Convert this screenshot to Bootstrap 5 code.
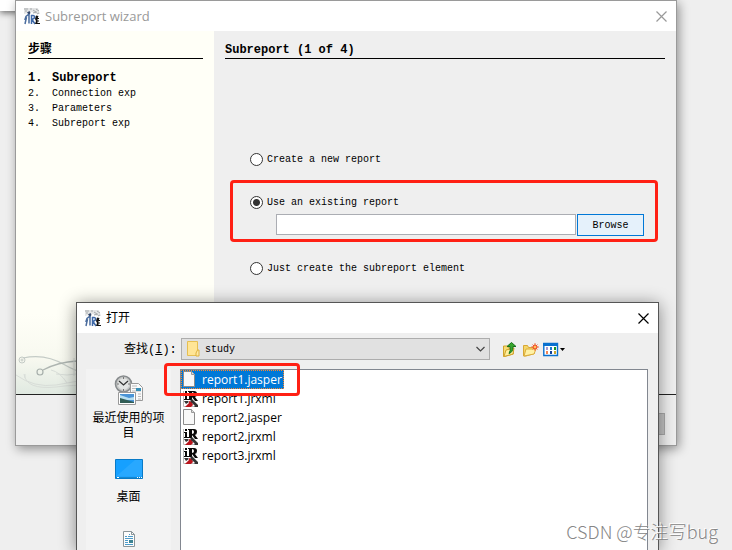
<!DOCTYPE html>
<html lang="zh-CN">
<head>
<meta charset="utf-8">
<meta name="viewport" content="width=device-width, initial-scale=1">
<title>Subreport wizard</title>
<link href="https://cdn.jsdelivr.net/npm/bootstrap@5.3.0/dist/css/bootstrap.min.css" rel="stylesheet">
<style>
  body { background: #efefef; color: #000; font-family: "Open Sans", "Noto Sans CJK SC", sans-serif; font-size: 12px; line-height: 15px; }
  .back-window { left: 0; top: 0; width: 330px; height: 11px; background: #fff; box-shadow: 0 2px 6px rgba(0,0,0,.55); }
  .win { border: 1px solid #9a9a9a; background: #efefef; }
  .win-wizard { left: 15px; right: 55px; top: 0; height: 446px; box-shadow: 2px 3px 10px rgba(0,0,0,.4); }
  .win-open { left: 76px; right: 73px; top: 302px; bottom: 0; border-color: #555; border-bottom: 0; box-shadow: 0 2px 16px rgba(0,0,0,.45); }
  .titlebar { height: 30px; background: #fff; padding: 0 7px 0 8px; gap: 4px; font-size: 12px; }
  .titlebar.inactive { color: #999; }
  .win-title { font-size: 12px; line-height: 18px; font-weight: 400; }
  .win-wizard .win-title { font-size: 13px; }
  .close-btn { color: inherit; line-height: 0; padding: 0 2px; }
  .mono { font-family: "Liberation Mono", "Noto Sans CJK SC", monospace; font-size: 10px; line-height: 15px; }
  .steps-panel { width: 198px; padding: 12px 11px 0 12px; background: linear-gradient(#fffff7 0 78%, #f8f9f0 90%, #e0e9e1); }
  .panel-heading { font: bold 12px/15px "Liberation Mono", "Noto Sans CJK SC", monospace; border-bottom: 1px solid #000; }
  .step-no { width: 24px; }
  .step-current { font-size: 12px; font-weight: 700; }
  .swirl { left: 0; bottom: 0; }
  .main-panel { padding: 12px 11px 0; }
  .choices { margin-top: 92px; padding-left: 25px; }
  .choice { gap: 4px; height: 16px; }
  .choice input { appearance: none; width: 13px; height: 13px; border: 1px solid #333; border-radius: 50%; background: #fff; margin: 0; }
  .choice input:checked { background: radial-gradient(circle, #333 0 3px, #fff 4px); }
  .existing { margin: 27px 0 24px; }
  .path-row { margin-top: 4px; padding: 0 21px 0 26px; gap: 1px; }
  .path-row input { height: 21px; border: 1px solid #abadb3; background: #fff; }
  .browse { width: 67px; height: 22px; border: 1px solid #0078d7; background: #e5f1fb; color: #000; }
  .redbox { border: 3px solid #ff2014; border-radius: 4px; pointer-events: none; }
  .redbox-path { left: -20px; right: 7px; top: -14px; bottom: -6px; }
  .redbox-file { left: -17px; top: -7px; width: 136px; height: 33px; }
  .wizard-foot { height: 51px; border-top: 1px solid #222; padding: 18px 11px 0; }
  .foot-btn { width: 60px; height: 22px; border: 1px solid #aaa; background: #c4c4c4; }
  .lookup { padding: 5px 92px 0 47px; height: 36px; }
  .lookup label { width: 57px; font-size: 12px; line-height: 22px; }
  .lookup label span { font-family: "Liberation Mono", monospace; }
  .folder-box select { appearance: none; height: 22px; border: 1px solid #adadad; border-radius: 0; background: #e1e1e1; padding: 0 23px; color: #000; }
  .folder-ico { left: 5px; top: 2px; }
  .chevron { right: 4px; top: 7px; }
  .tools { gap: 4px; padding-left: 12px; }
  .tools button { line-height: 0; }
  .places { width: 85px; background: #f3f3f3; margin-left: 9px; padding: 6px 6px 0; font-family: "Noto Sans CJK SC", sans-serif; }
  .place { color: #000; line-height: 15px; font-size: 12px; }
  .file-list { margin: 0 10px 0 9px; border: 1px solid #828790; border-bottom: 0; background: #fff; }
  .file { height: 19px; gap: 3px; padding: 0 1px; color: #000; font-size: 12px; line-height: 17px; border: 1px dotted transparent; }
  .file.chosen { background: #0078d7; color: #fff; border-color: #ff8728; }
  .watermark { right: 14px; bottom: 7px; font-size: 18px; line-height: 24px; color: #868686; text-shadow: -1px -1px 0 #fff; font-family: "Noto Sans CJK SC", sans-serif; font-weight: 300; }
  svg { flex: none; }
</style>
</head>
<body>
<svg width="0" height="0" class="position-absolute" aria-hidden="true">
  <defs>
    <symbol id="app" viewBox="0 0 17 17">
      <path d="M0 0h14l2 6h-4L8 4 0 6z" fill="#e3e4e5"/><path d="M0 1h4M6 1h2M9 2l3 2M12 1l3 2M9 5l4-1M13 6l2-1M1 3h2" stroke="#a5a9ab" fill="none"/>
      <path d="M3 4.500l2.500-1.500 1 2L5 7z" fill="#34486b"/><path d="M5 6L2 8.500.8 12M5 6v9.500M2.500 9L1 16" stroke="#4a6c9e" stroke-width="1.500" fill="none"/>
      <path d="M7.500 16V7.500h1.700q2 .3 1 2.700L8 11.500l3 4.500" stroke="#3e68a8" stroke-width="1.500" fill="none"/>
      <path d="M12 7.500l2.500.5-.7 2H15v1h-1.500v1.500H15v1h-1.500V15H16v1h-5l1-3-1-2z" fill="#111"/>
    </symbol>
    <symbol id="close" viewBox="0 0 11 11"><path d="M.5 .5l10 10M10.500 .5l-10 10" stroke="currentColor" stroke-width="1.200" fill="none"/></symbol>
    <symbol id="page" viewBox="0 0 14 17"><path d="M1.500 .5h8l3 3v12h-11z" fill="#f8f8f8" stroke="#8c8c8c"/><path d="M9.500 .5v3h3" fill="#ddd" stroke="#999"/></symbol>
    <symbol id="ir" viewBox="0 0 16 16">
      <path d="M.5 0v15.500H15" fill="none" stroke="#bbb"/><path d="M12 1h2v5h-2" fill="#ddd"/>
      <path d="M2 0h2v2H2zM1 3h3v5h1v1H1V8h1V4H1zM5 0h6q3 0 3 3 0 2-2 3l3 4h-3L9 6v3H5V8h1V1H5zM9 1v4q2 0 2-2t-2-2" fill="#080808" fill-rule="evenodd"/>
      <path d="M6 10l3 1 1 3-2 2H2l4-4z" fill="#b9151d"/><path d="M9 8l6 6v2h-4l1-1-5-5z" fill="#333"/><path d="M1 10h4l1 1-3 2" fill="#333"/>
    </symbol>
  </defs>
</svg>

<div class="desktop position-relative overflow-hidden vh-100">
  <div class="back-window position-absolute"></div>

  <section class="win win-wizard position-absolute d-flex flex-column">
    <header class="titlebar inactive d-flex align-items-center">
      <svg width="17" height="17"><use href="#app"/></svg>
      <h1 class="win-title m-0 flex-grow-1">Subreport wizard</h1>
      <button type="button" class="close-btn border-0 bg-transparent" aria-label="Close"><svg width="11" height="11"><use href="#close"/></svg></button>
    </header>
    <div class="d-flex flex-grow-1">
      <aside class="steps-panel position-relative flex-shrink-0">
        <h2 class="panel-heading m-0">步骤</h2>
        <ol class="mono list-unstyled mt-2 mb-0 pt-1">
          <li class="step-current d-flex"><span class="step-no">1.</span>Subreport</li>
          <li class="d-flex"><span class="step-no">2.</span>Connection exp</li>
          <li class="d-flex"><span class="step-no">3.</span>Parameters</li>
          <li class="d-flex"><span class="step-no">4.</span>Subreport exp</li>
        </ol>
        <svg class="swirl position-absolute" width="100" height="44" viewBox="0 0 100 44" fill="none" stroke="#c4cbc6">
          <circle cx="6" cy="10" r="3"/><circle cx="6" cy="10" r="1"/><path d="M7 8q22-5 42 7t51 12" stroke-width="1.200"/>
          <circle cx="24" cy="22" r="3" stroke="#a8b0ac" stroke-width="1.200"/><path d="M27 20q15-8 34-9" stroke="#aeb5b1" stroke-width="1.300"/>
          <path d="M0 25q18 13 40 10t40-9M8 24q2 16 32 13 20-3 30 0M9 28v-4M35 20q9 2 16 13M40 24q12 2 20 0M58 8v18" stroke="#d8ddd8"/>
        </svg>
      </aside>
      <main class="main-panel flex-grow-1">
        <h2 class="panel-heading m-0">Subreport (1 of 4)</h2>
        <form class="choices mono">
          <div class="choice d-flex align-items-center"><input type="radio" name="mode" id="m1"><label for="m1">Create a new report</label></div>
          <div class="existing position-relative">
            <div class="choice d-flex align-items-center"><input type="radio" name="mode" id="m2" checked><label for="m2">Use an existing report</label></div>
            <div class="path-row d-flex">
              <input type="text" class="flex-grow-1" aria-label="Report path">
              <button type="button" class="browse p-0">Browse</button>
            </div>
            <div class="redbox redbox-path position-absolute"></div>
          </div>
          <div class="choice d-flex align-items-center"><input type="radio" name="mode" id="m3"><label for="m3">Just create the subreport element</label></div>
        </form>
      </main>
    </div>
    <footer class="wizard-foot d-flex justify-content-end"><button type="button" class="foot-btn" aria-label="Help"></button></footer>
  </section>

  <section class="win win-open position-absolute d-flex flex-column">
    <header class="titlebar d-flex align-items-center flex-shrink-0">
      <svg width="17" height="17"><use href="#app"/></svg>
      <h1 class="win-title m-0 flex-grow-1">打开</h1>
      <button type="button" class="close-btn border-0 bg-transparent" aria-label="关闭"><svg width="11" height="11"><use href="#close"/></svg></button>
    </header>
    <div class="lookup d-flex align-items-start flex-shrink-0">
      <label for="folder">查找<span>(<u>I</u>):</span></label>
      <div class="folder-box position-relative flex-grow-1">
        <select id="folder" class="mono w-100 d-block"><option>study</option></select>
        <svg class="folder-ico position-absolute" width="14" height="18" viewBox="0 0 14 18"><path d="M1.500 1.500h10v14h-10z" fill="#ffe596" stroke="#e6bf52"/><path d="M11.500 10h1.500v6h-3v-3z" fill="#ffeaa5" stroke="#dfb13d"/></svg>
        <svg class="chevron position-absolute" width="11" height="9" viewBox="0 0 11 9"><path d="M1.500 2l4 4 4-4" fill="none" stroke="#444" stroke-width="1.200"/></svg>
      </div>
      <div class="tools d-flex align-items-center mt-1">
        <button type="button" class="border-0 bg-transparent p-0" aria-label="Up one level"><svg width="16" height="16" viewBox="0 0 16 16"><path d="M1.500 4h4l1 2h5v6l-9 2.500h-1z" fill="#f6dc74" stroke="#d0a22c"/><path d="M4 8l8-2-1 6-9 2.500z" fill="#fff0a0" stroke="#d0a22c"/><path d="M5 4.500L9.500 .5 14 4.500h-3q0 6-4 7 2-3 1-7z" fill="#37a52d" stroke="#17711a"/></svg></button>
        <button type="button" class="border-0 bg-transparent p-0" aria-label="New folder"><svg width="17" height="16" viewBox="0 0 17 16"><path d="M1.500 3.500h4l1 2h6v6L4 14H1.500z" fill="#f4d66a" stroke="#d8a735"/><path d="M4 7h10l-2 5-10 2z" fill="#fff1a5" stroke="#dcae3c"/><path d="M13 1v8M9 5h8M10.500 2.500l5 5M15.500 2.500l-5 5" stroke="#f1784d"/><circle cx="13" cy="5" r="2" fill="#ffc05a" stroke="#ed3e21"/></svg></button>
        <button type="button" class="border-0 bg-transparent p-0" aria-label="View"><svg width="23" height="16" viewBox="0 0 23 16"><path d="M.8 1.500h13.700v12H.8z" fill="#fff" stroke="#0870cf" stroke-width="1.400"/><path d="M0 1h15v3H0z" fill="#0870cf"/><path d="M3 5h2v3H3z" fill="#a79bd0"/><path d="M7 5h2v3H7z" fill="#197ad1"/><path d="M11 5h2v3h-2z" fill="#149427"/><path d="M3 9h2v3H3z" fill="#f48554"/><path d="M7 9h2v3H7z" fill="#123f97"/><path d="M11 9h2v3h-2z" fill="#c8a52b"/><path d="M17 6h5l-2.500 3z" fill="#000"/></svg></button>
      </div>
    </div>
    <div class="d-flex flex-grow-1">
      <nav class="places d-flex flex-column align-items-center flex-shrink-0" aria-label="Places">
        <button type="button" class="place border-0 bg-transparent p-0 w-100">
          <svg class="d-block mx-auto mb-1" width="30" height="30" viewBox="0 0 30 30"><circle cx="9.500" cy="9" r="8" fill="#c8cac9" stroke="#888c8e" stroke-width="1.600"/><circle cx="9.500" cy="9" r="5.800" fill="#e2e4e3"/><path d="M5 6l4.500 4L14 6" fill="none" stroke="#333" stroke-width="1.300"/><path d="M9.500 2v2M9.500 14v2M3 9h2M14 9h2" stroke="#777"/><path d="M16.500 8.500h8l4 4v13h-12z" fill="#fafafa" stroke="#999"/><path d="M18 11h5M18 13.500h4M18 16h9M24 19h3M24 21.500h3M24 24h3" stroke="#bbb"/><path d="M22 13h5v3h-5z" fill="#3890b7"/><path d="M4.500 17.500h17v12h-17z" fill="#fff" stroke="#999"/><path d="M6 19h14v9H6z" fill="#4a94d6"/><path d="M6 20l9 3 5-1v3H6z" fill="#b8dff0"/><path d="M6 23q7 2 14 4v1H6z" fill="#315d55"/></svg>
          最近使用的项目
        </button>
        <button type="button" class="place border-0 bg-transparent p-0 mt-3">
          <svg class="d-block mx-auto mt-1 mb-2" width="28" height="21" viewBox="0 0 28 21"><path d="M.5 .5h27v19H.5z" fill="#16a0ff" stroke="#087ac7"/><path d="M1 17.500L20 1h7v16.500z" fill="#38aeff" opacity=".55"/><path d="M1 18.500h26" stroke="#1687d0"/><path d="M2 18.500h2M22 18.500h1M24 18.500h1M26 18.500h1" stroke="#fff"/></svg>
          桌面
        </button>
        <button type="button" class="place border-0 bg-transparent p-0 mt-4" aria-label="文档">
          <svg class="d-block mt-1" width="12" height="16" viewBox="0 0 12 16"><path d="M.5 .5h8l3 3v12H.5z" fill="#fcfcfc" stroke="#8a9599"/><path d="M8.500 .5v3h3" fill="none" stroke="#8a9599"/><path d="M2 5.500h2M6 3.500h1M5 5.500h5M2 7.500h8M2 9.500h3M2 11.500h3M2 13.500h8" stroke="#4b9bc9"/><path d="M6 9h4v3H6z" fill="#3d8392"/></svg>
        </button>
      </nav>
      <div class="file-list flex-grow-1 position-relative">
        <ul class="list-unstyled m-0">
          <li><button type="button" class="file chosen d-flex align-items-center"><svg width="16" height="17" viewBox="1 0 16 17"><use href="#page" width="14" height="17"/></svg>report1.jasper</button></li>
          <li><button type="button" class="file d-flex align-items-center bg-transparent"><svg width="16" height="16"><use href="#ir"/></svg>report1.jrxml</button></li>
          <li><button type="button" class="file d-flex align-items-center bg-transparent"><svg width="16" height="17" viewBox="1 0 16 17"><use href="#page" width="14" height="17"/></svg>report2.jasper</button></li>
          <li><button type="button" class="file d-flex align-items-center bg-transparent"><svg width="16" height="16"><use href="#ir"/></svg>report2.jrxml</button></li>
          <li><button type="button" class="file d-flex align-items-center bg-transparent"><svg width="16" height="16"><use href="#ir"/></svg>report3.jrxml</button></li>
        </ul>
        <div class="redbox redbox-file position-absolute"></div>
      </div>
    </div>
  </section>

  <div class="watermark position-absolute">CSDN @专注写bug</div>
</div>
<script src="https://cdn.jsdelivr.net/npm/bootstrap@5.3.0/dist/js/bootstrap.bundle.min.js"></script>
</body>
</html>
